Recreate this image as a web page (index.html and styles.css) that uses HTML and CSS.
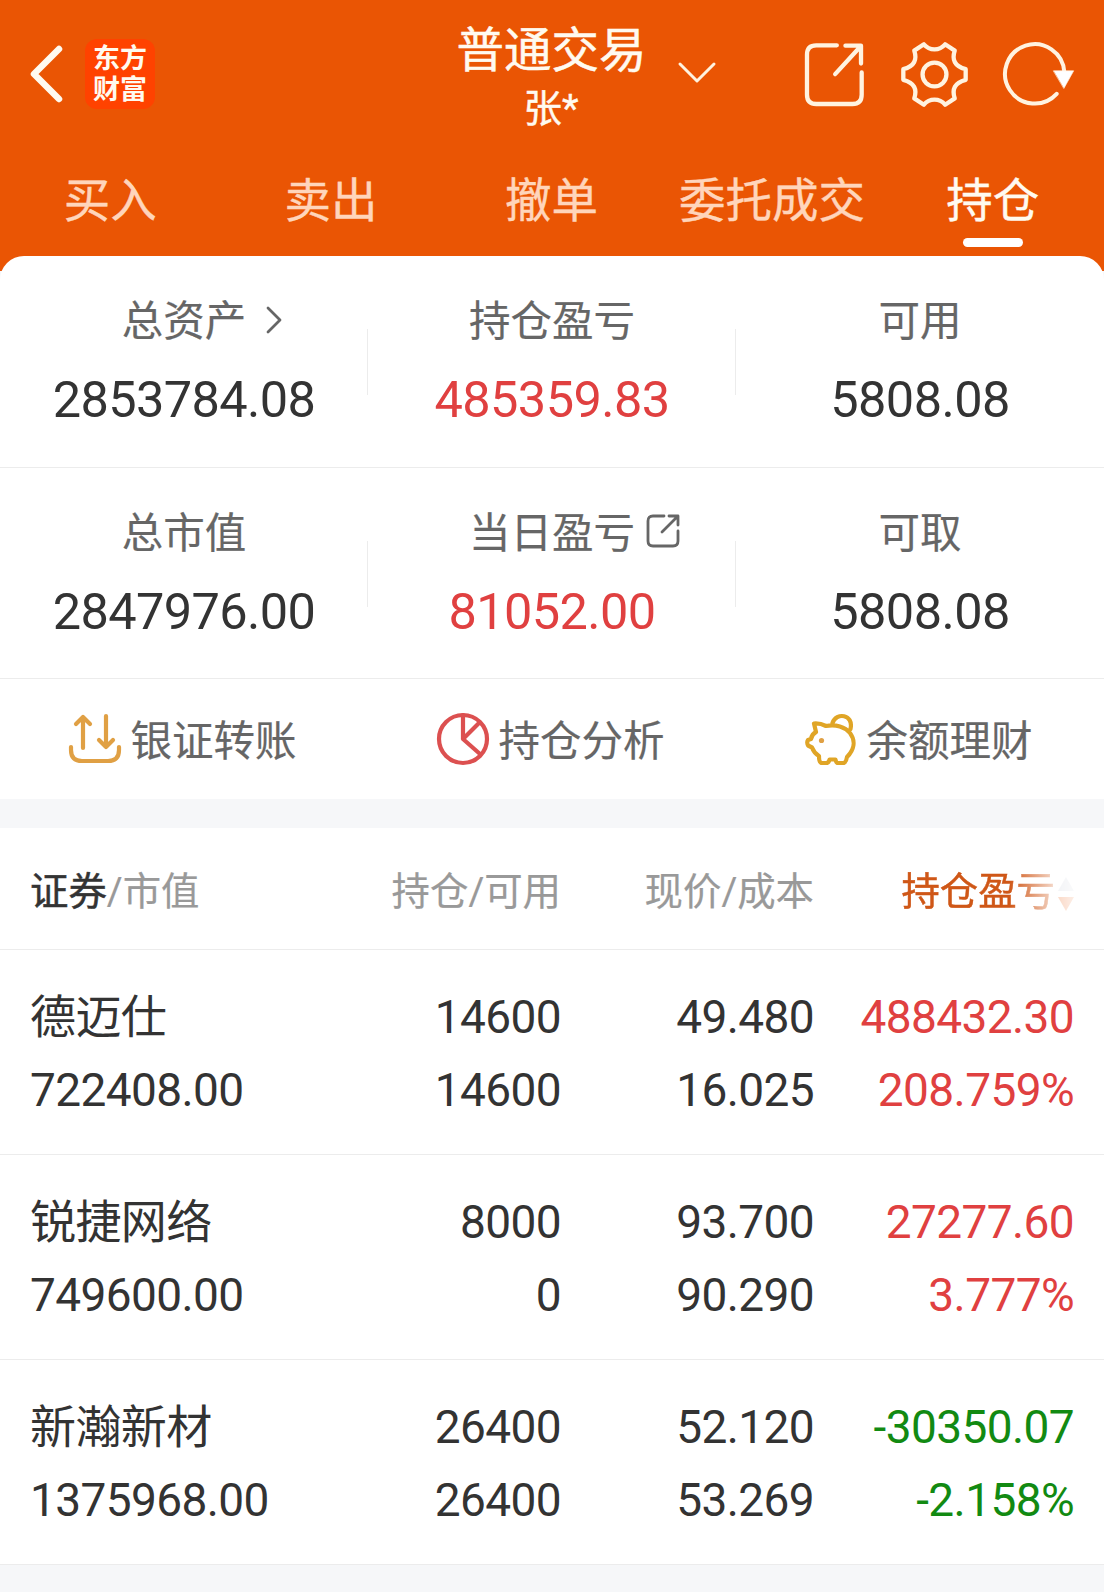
FILE: index.html
```
<!DOCTYPE html>
<html lang="zh-CN">
<head>
    <meta charset="UTF-8">
    <title>普通交易</title>
    <link rel="stylesheet" href="styles.css">
</head>
<body>
    <div class="header">
        <div class="topbar">
            <div class="topbar-left">
                <svg class="back" viewBox="0 0 32 56" width="32" height="56"><path d="M29 3 L4 28 L29 53"/></svg>
                <div class="logo">东方<br>财富</div>
            </div>
            <div class="account">
                <div class="account-title">
                    普通交易
                    <svg class="caret" viewBox="0 0 38 22" width="38" height="22"><path d="M2 2 L19 19 L36 2"/></svg>
                </div>
                <div class="account-name">张*</div>
            </div>
            <div class="topbar-right">
                <svg class="share" viewBox="206 126 178 194" width="59" height="65"><path d="M302 135 H240 Q212 135 212 163 V284 Q212 312 240 312 H349 Q377 312 377 284 V217 M328 136 H375 V190 M297 222 L374 138"/></svg>
                <svg class="gear" viewBox="-101 -97 202 194" width="67" height="65"><path d="M-94 -16 C-60 -25 -52 -45 -61 -72 L-32 -91 C-15 -71 15 -71 32 -91 L61 -72 C52 -45 60 -25 94 -16 V16 C60 25 52 45 61 72 L32 91 C15 71 -15 71 -32 91 L-61 72 C-52 45 -60 25 -94 16 Z"/><circle r="36"/></svg>
                <svg class="refresh" viewBox="800 126 216 194" width="72" height="65"><path d="M964 281 A89 89 0 1 1 987 216"/><path class="head" d="M955 212 H1015 L986 264 Z"/></svg>
            </div>
        </div>
        <div class="tabs">
            <div class="tab">买入</div>
            <div class="tab">卖出</div>
            <div class="tab">撤单</div>
            <div class="tab">委托成交</div>
            <div class="tab active">持仓</div>
        </div>
    </div>

    <div class="summary">
        <div class="summary-row">
            <div class="stat">
                <div class="label">总资产<svg class="more" viewBox="0 0 16 28" width="16" height="28"><path d="M2 2 L14 14 L2 26"/></svg></div>
                <div class="value">2853784.08</div>
            </div>
            <div class="stat">
                <div class="label">持仓盈亏</div>
                <div class="value up">485359.83</div>
            </div>
            <div class="stat">
                <div class="label">可用</div>
                <div class="value">5808.08</div>
            </div>
        </div>
        <div class="summary-row">
            <div class="stat">
                <div class="label">总市值</div>
                <div class="value">2847976.00</div>
            </div>
            <div class="stat">
                <div class="label">当日盈亏<svg class="detail" viewBox="0 0 34 34" width="34" height="34"><path d="M18 2 H7 Q2 2 2 7 V27 Q2 32 7 32 H27 Q32 32 32 27 V17 M23 2 H32 V11 M16 18 L31 3"/></svg></div>
                <div class="value up">81052.00</div>
            </div>
            <div class="stat">
                <div class="label">可取</div>
                <div class="value">5808.08</div>
            </div>
        </div>
        <div class="actions">
            <div class="action">
                <svg class="transfer" viewBox="0 0 52 52" width="52" height="52"><path d="M14 35 V4 M7 11 L14 4 L21 11 M37 3 V34 M30 27 L37 34 L44 27 M2 34 V37 Q2 48 13 48 H39 Q50 48 50 37 V34"/></svg>
                <span>银证转账</span>
            </div>
            <div class="action">
                <svg class="pie" viewBox="0 0 52 52" width="52" height="52"><circle cx="26" cy="26" r="24"/><path d="M26 2 V26 L42 10 M26 26 L43 41"/></svg>
                <span>持仓分析</span>
            </div>
            <div class="action">
                <svg class="pig" viewBox="0 0 52 52" width="52" height="52"><path d="M21 13 C31 11 40 14 45 20 C51 28 49 37 42 44 Q41 50 38 50 H33 Q31 50 30.5 46.5 H24.5 Q24 50 21 50 H17 Q14 50 14 43 Q9 40 7 34.5 L3 32.5 Q1.500 29 3 27 L6 26 Q7 21 11 19 L9 10.500 Q15 10 21 13 Z M27.500 10 C31 -1 49 1 45.500 16"/><circle class="eye" cx="16.500" cy="27.500" r="2.600"/></svg>
                <span>余额理财</span>
            </div>
        </div>
    </div>

    <div class="positions">
        <div class="row row-head">
            <div><b>证券</b>/市值</div>
            <div>持仓/可用</div>
            <div>现价/成本</div>
            <div class="sorted">持仓盈亏<svg class="sort" viewBox="0 0 16 36" width="16" height="36"><path class="asc" d="M8 1 L16 15 H0 Z"/><path d="M0 21 H16 L8 35 Z"/></svg></div>
        </div>
        <div class="row">
            <div>德迈仕<br>722408.00</div>
            <div>14600<br>14600</div>
            <div>49.480<br>16.025</div>
            <div class="up">488432.30<br>208.759%</div>
        </div>
        <div class="row">
            <div>锐捷网络<br>749600.00</div>
            <div>8000<br>0</div>
            <div>93.700<br>90.290</div>
            <div class="up">27277.60<br>3.777%</div>
        </div>
        <div class="row">
            <div>新瀚新材<br>1375968.00</div>
            <div>26400<br>26400</div>
            <div>52.120<br>53.269</div>
            <div class="down">-30350.07<br>-2.158%</div>
        </div>
    </div>
</body>
</html>
```
FILE: styles.css
```
* {
    box-sizing: border-box;
}

body {
    margin: 0;
    height: 1592px;
    overflow: hidden;
    background: #f6f7f9;
    color: #333;
    font-family: Roboto, "Noto Sans CJK SC", sans-serif;
}

svg {
    display: block;
    flex: none;
    overflow: visible;
    fill: none;
    stroke: #fff3e0;
    stroke-width: 3;
    stroke-linecap: round;
    stroke-linejoin: round;
}

.header {
    height: 271px;
    background: #ea5504;
    color: #fffaf0;
}

.topbar {
    display: grid;
    grid-template-columns: 367px 368px 369px;
    height: 148px;
}

.topbar-left {
    display: flex;
    align-items: center;
    gap: 23px;
    padding-left: 30px;
}

.back {
    stroke: #fffaf0;
    stroke-width: 6.5;
}

.logo {
    width: 70px;
    height: 70px;
    padding-top: 5px;
    border-radius: 12px;
    background: #ff4200;
    font-size: 27px;
    font-weight: bold;
    line-height: 31px;
    text-align: center;
}

.account {
    display: flex;
    flex-direction: column;
    align-items: center;
    padding-top: 21px;
}

.account-title {
    display: flex;
    align-items: center;
    height: 60px;
    font-size: 47.5px;
    line-height: 60px;
    -webkit-text-stroke: 0.5px #fffaf0;
}

.caret {
    margin: 43px -70px 0 31px;
}

.account-name {
    margin-top: 3px;
    font-size: 38.5px;
    line-height: 50px;
    -webkit-text-stroke: 0.4px #fffaf0;
}

.topbar-right {
    display: flex;
    align-items: center;
    padding-left: 70px;
}

.share,
.gear,
.refresh {
    stroke-width: 13;
}

.gear {
    margin: 0 34px 0 37px;
}

.refresh {
    stroke-width: 12;
}

.head {
    fill: #fff;
    stroke-width: 2;
}

.tabs {
    display: flex;
    margin-right: 1px;
    padding-top: 8px;
}

.tab {
    display: flex;
    flex: 1;
    flex-direction: column;
    align-items: center;
    color: #ffd5bb;
    font-size: 46.5px;
    line-height: 90px;
    white-space: nowrap;
    -webkit-text-stroke: 0.4px;
}

.tab.active {
    color: #fffaf0;
}

.tab.active::after {
    content: "";
    width: 60px;
    height: 9px;
    margin-top: -8px;
    border-radius: 5px;
    background: #fff;
}

/* the sheet slides up over the bottom of the header */
.summary {
    margin-top: -15px;
    border-radius: 24px 24px 0 0;
    background: #fff;
}

.summary-row {
    display: flex;
    height: 212px;
    padding-top: 30px;
    border-bottom: 1px solid #ececec;
}

.summary-row + .summary-row {
    height: 211px;
}

.stat {
    flex: 1;
    height: 150px;
    text-align: center;
    background: linear-gradient(#ececec, #ececec) no-repeat right 43px / 1px 66px;
}

.stat:last-child {
    background: none;
}

.label {
    display: flex;
    align-items: center;
    justify-content: center;
    height: 70px;
    padding-bottom: 6px;
    color: #666;
    font-size: 41.5px;
    -webkit-text-stroke: 0.2px;
}

.label svg {
    stroke: #666;
    stroke-width: 2.8;
}

.more {
    margin: 4px -36px 0 20px;
}

.detail {
    margin: 2px -45px 0 11px;
}

.value {
    font-size: 50.5px;
    line-height: 88px;
    letter-spacing: -0.6px;
}

.up {
    color: #e04040;
}

.down {
    color: #128a12;
}

.actions {
    display: flex;
    height: 120px;
}

.action {
    display: flex;
    flex: 1;
    align-items: center;
    justify-content: center;
    gap: 9px;
    padding-right: 2px;
    color: #666;
    font-size: 41.5px;
    -webkit-text-stroke: 0.2px;
}

.action span {
    margin-top: -3px;
}

.action svg {
    stroke-width: 4.2;
}

.transfer {
    stroke: #e0a044;
}

.pie {
    stroke: #dc5050;
}

.pig {
    stroke: #e0a526;
}

.action .eye {
    fill: #e0a044;
    stroke: none;
}

.positions {
    margin-top: 29px;
    background: #fff;
}

.row {
    display: grid;
    grid-template-columns: 330px 201px 253px 260px;
    height: 205px;
    padding: 31px 30px 0;
    border-bottom: 1px solid #ececec;
    font-size: 46px;
    line-height: 73px;
    letter-spacing: -0.6px;
    text-align: right;
}

.row > :first-child {
    text-align: left;
}

.row-head {
    height: 122px;
    padding-top: 27px;
    color: #999;
    font-size: 38.4px;
    letter-spacing: 0;
    -webkit-text-stroke: 0.2px;
}

.row-head b {
    color: #333;
    font-weight: normal;
    -webkit-text-stroke: 0.5px;
}

.sorted {
    display: flex;
    align-items: center;
    justify-content: flex-end;
    height: 73px;
    color: #cf5717;
    -webkit-text-stroke: 0.5px;
    -webkit-mask: linear-gradient(to right, #000 75%, rgba(0, 0, 0, 0.25) 92%, rgba(0, 0, 0, 0.1) 100%);
    mask: linear-gradient(to right, #000 75%, rgba(0, 0, 0, 0.25) 92%, rgba(0, 0, 0, 0.1) 100%);
}

.sort {
    margin: 4px 0 0 3px;
    fill: #ea5504;
    stroke: none;
}

.sort .asc {
    fill: #c8ccd8;
}
```
